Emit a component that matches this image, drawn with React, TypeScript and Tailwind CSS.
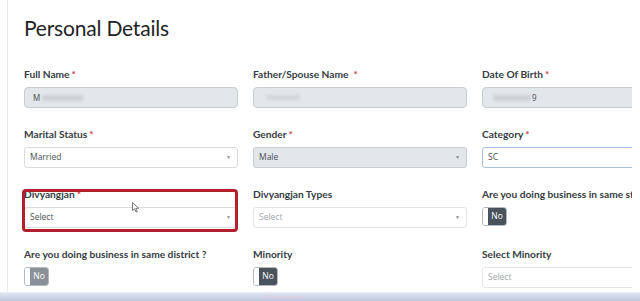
import React from "react";

const labelCls =
  "block h-[14px] text-[10.2px] leading-[14px] font-bold text-[#363c42] whitespace-nowrap";
const font = { fontFamily: '"Lato", "Noto Sans", sans-serif' };

function Label({ text, req, spaced }: { text: string; req?: boolean; spaced?: boolean }) {
  return (
    <span className={labelCls} style={font}>
      {text}
      {req && <span className={`text-[#d0424f] ${spaced ? "ml-[5px]" : "ml-[2px]"}`}>*</span>}
    </span>
  );
}

function GrayInput({ children }: { children?: React.ReactNode }) {
  return (
    <div className="mt-[6px] h-[21px] w-[214px] rounded-[4px] border border-[#c9ced4] bg-[#e3e6ea] flex items-center pl-[8px] text-[8px] text-[#555]">
      {children}
    </div>
  );
}

function Sel({
  value,
  bg = "bg-white",
  border = "border-[#d8dce0]",
  placeholder,
  noChevron,
}: {
  value: string;
  bg?: string;
  border?: string;
  placeholder?: boolean;
  noChevron?: boolean;
}) {
  return (
    <div
      className={`mt-[6px] h-[21px] w-[214px] rounded-[3px] border ${border} ${bg} flex items-center justify-between pl-[5px] pr-[6px] text-[8.5px] ${placeholder ? "text-[#a0a5aa]" : "text-[#4a4f55]"}`}
      style={{ fontFamily: '"Open Sans", "Liberation Sans", sans-serif' }}
    >
      <span>{value}</span>
      {!noChevron && <span className="text-[5px] text-[#888]">▼</span>}
    </div>
  );
}

function Toggle({ dark }: { dark?: boolean }) {
  return (
    <div className="mt-[6px] flex h-[19px] w-[25px] overflow-hidden rounded-[3px] border border-[#b4b9be]">
      <div className="w-[5px] bg-white" />
      <div
        className={`flex flex-1 items-center justify-center text-[8.5px] text-white ${dark ? "bg-[#4a525b]" : "bg-[#8a9098]"}`}
        style={{ fontFamily: '"Open Sans", "Liberation Sans", sans-serif' }}
      >
        No
      </div>
    </div>
  );
}

export default function App() {
  return (
    <div className="relative h-[301px] w-[640px] overflow-hidden bg-white">
      <div className="absolute left-[7px] top-0 h-[292px] w-px bg-[#e8e9eb]" />
      <div className="h-[292px] w-[632px] overflow-hidden pl-[24px]">
        <h1
          className="pt-[15px] h-[67px] text-[21px] leading-[26px] tracking-[-0.2px] text-[#1f2327]"
          style={font}
        >
          Personal Details
        </h1>
        <div className="grid grid-cols-[214px_214px_214px] gap-x-[15px] gap-y-[19px]">
          <div>
            <Label text="Full Name" req />
            <GrayInput>
              <span className="text-[#555]">M</span>
              <span className="ml-[2px] h-[6px] w-[42px] rounded-full bg-[#cdd1d6] blur-[1.5px]" />
            </GrayInput>
          </div>
          <div>
            <Label text="Father/Spouse Name" req spaced />
            <GrayInput>
              <span className="ml-[4px] h-[5px] w-[34px] rounded-full bg-[#d2d6da] blur-[1.5px]" />
            </GrayInput>
          </div>
          <div>
            <Label text="Date Of Birth" req />
            <GrayInput>
              <span className="ml-[2px] h-[6px] w-[38px] rounded-full bg-[#cdd1d6] blur-[1.5px]" />
              <span className="ml-[1px]">9</span>
            </GrayInput>
          </div>

          <div>
            <Label text="Marital Status" req />
            <Sel value="Married" />
          </div>
          <div>
            <Label text="Gender" req />
            <Sel value="Male" bg="bg-[#e3e6ea]" border="border-[#c9ced4]" />
          </div>
          <div>
            <Label text="Category" req />
            <Sel value="SC" border="border-[#a9c2e4]" noChevron />
          </div>

          <div className="relative">
            <Label text="Divyangjan" req />
            <Sel value="Select" />
            <div className="absolute left-[-2px] top-[2px] h-[43px] w-[216px] rounded-[4px] border-[3px] border-[#b3202d]" />
            <svg
              className="absolute left-[108px] top-[15px]"
              width="8"
              height="11"
              viewBox="0 0 8 11"
            >
              <path d="M0.5 0.5 L0.5 8.5 L2.5 6.8 L4 10 L5.3 9.4 L3.8 6.3 L6.6 6.3 Z" fill="white" stroke="#555" strokeWidth="0.8" />
            </svg>
          </div>
          <div>
            <Label text="Divyangjan Types" />
            <Sel value="Select" placeholder border="border-[#e3e6e9]" />
          </div>
          <div>
            <Label text="Are you doing business in same state ?" />
            <Toggle dark />
          </div>

          <div>
            <Label text="Are you doing business in same district ?" />
            <Toggle />
          </div>
          <div>
            <Label text="Minority" />
            <Toggle dark />
          </div>
          <div>
            <Label text="Select Minority" />
            <Sel value="Select" placeholder border="border-[#e3e6e9]" noChevron />
          </div>
        </div>
      </div>
      <div className="relative h-[9px] w-full border-t border-[#e8ecf4] bg-gradient-to-b from-[#dfe5f1] to-[#bcc6de]">
        <span className="absolute left-[262px] top-[0px] text-[6px] leading-[8px] text-[#e6c8de] blur-[0.5px]" style={font}>
          all test example
        </span>
      </div>
    </div>
  );
}
